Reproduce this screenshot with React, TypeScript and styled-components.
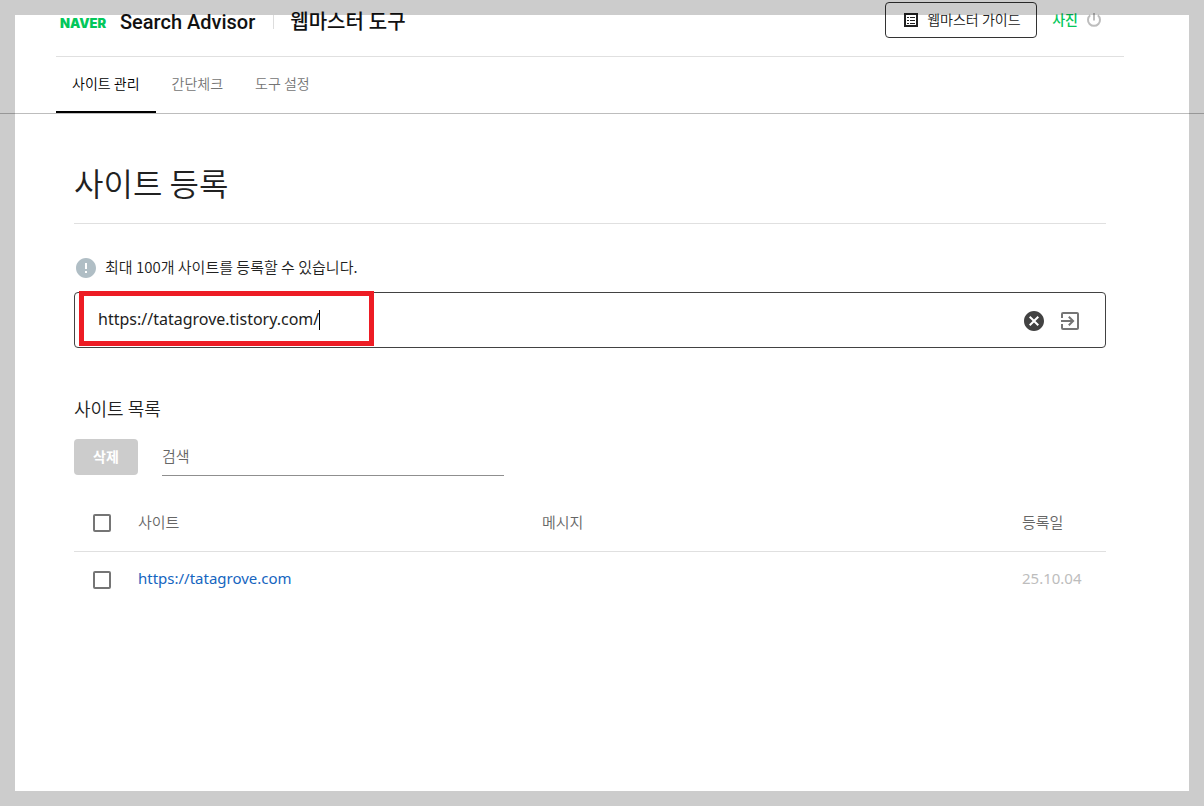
import React, { useState } from "react";
import styled, { createGlobalStyle } from "styled-components";
import { MdCancel, MdError, MdExitToApp } from "react-icons/md";

const GlobalStyle = createGlobalStyle`
  * { box-sizing: border-box; }
  body {
    margin: 0;
    background: #fff;
    color: #212121;
    font-family: "Noto Sans CJK KR", sans-serif;
    font-size: 15px;
    font-weight: 350;
  }
  button, input { font: inherit; color: inherit; }
  a { text-decoration: none; }
`;

const Page = styled.div`
  min-height: 100vh;
`;

const Frame = styled.div`
  position: fixed;
  inset: 0;
  border: 15px solid rgba(0, 0, 0, 0.2);
  pointer-events: none;
`;

const Container = styled.div`
  padding: 0 80px 0 56px;
`;

const Header = styled.header`
  display: flex;
  align-items: flex-start;
  justify-content: space-between;
  height: 57px;
  padding: 2px 21px 0 4px;
  border-bottom: 1px solid #e0e0e0;
`;

const Brand = styled.a`
  display: flex;
  align-items: center;
  height: 40px;
  color: #111;
`;

const Logo = styled.span`
  width: 60px;
  padding-top: 2px;
  color: #03c75a;
  font-family: Inter, sans-serif;
  font-size: 13px;
  font-weight: 900;
`;

const BrandName = styled.span`
  font-family: Roboto, "Noto Sans CJK KR", sans-serif;
  font-size: 20px;
  font-weight: 500;
  line-height: 36px;
`;

const BrandDivider = styled.span`
  width: 1px;
  height: 14px;
  margin: 0 16px 0 18px;
  background: #ddd;
`;

const Account = styled.div`
  display: flex;
  align-items: center;
  height: 36px;
`;

const GuideButton = styled.button`
  display: flex;
  align-items: center;
  gap: 7px;
  width: 152px;
  height: 36px;
  margin-right: 15px;
  padding: 0 0 0 16px;
  border: 1px solid #333;
  border-radius: 4px;
  background: none;
  font-size: 14px;
  white-space: nowrap;
`;

const ButtonLabel = styled.span`
  padding-bottom: 2px;
`;

const UserLink = styled.a`
  margin-right: 7px;
  padding-bottom: 2px;
  color: #03c75a;
  font-size: 14px;
  font-weight: 500;
`;

const IconButton = styled.button<{ $color: string }>`
  display: flex;
  padding: 0;
  border: 0;
  background: none;
  color: ${(p) => p.$color};
`;

const TabBar = styled.nav`
  border-bottom: 1px solid #bdbdbd;
`;

const Tabs = styled(Container)`
  display: flex;
`;

const Tab = styled.a<{ $active?: boolean }>`
  height: 56px;
  padding: 0 16px;
  border-bottom: 2px solid ${(p) => (p.$active ? "#000" : "transparent")};
  color: ${(p) => (p.$active ? "#000" : "#757575")};
  font-size: 14px;
  line-height: 52px;
`;

const Main = styled.main`
  padding: 44px 98px 44px 74px;
`;

const PageTitle = styled.h1`
  margin: 0;
  padding-bottom: 17px;
  border-bottom: 1px solid #e0e0e0;
  font-size: 32px;
  font-weight: 350;
  line-height: 48px;
`;

const Notice = styled.label`
  display: flex;
  align-items: center;
  gap: 7px;
  margin: 32px 0 12px;
  line-height: 22px;

  svg { color: #b0bec5; }
  span { padding-bottom: 2px; }
`;

const SiteField = styled.div`
  position: relative;
  display: flex;
  align-items: center;
  height: 56px;
  padding: 0 23px;
  border: 1px solid #424242;
  border-radius: 4px;
`;

const SiteInput = styled.input`
  field-sizing: content;
  min-width: 1px;
  padding: 0 0 2px;
  border: 0;
  outline: 0;
  background: none;
  font-family: "Noto Sans", "Noto Sans CJK KR", sans-serif;
  font-size: 16px;
  font-weight: 400;
`;

const Caret = styled.span`
  width: 1px;
  height: 20px;
  background: #000;
`;

const FieldActions = styled.div`
  display: flex;
  gap: 12px;
  margin-left: auto;
  padding-top: 2px;
`;

const Highlight = styled.div`
  position: absolute;
  top: -2px;
  left: 4px;
  width: 295px;
  height: 55px;
  border: 5px solid #ed1c24;
  pointer-events: none;
`;

const ListTitle = styled.h2`
  margin: 48px 0 19px;
  font-size: 18px;
  font-weight: 350;
  line-height: 24px;
`;

const Toolbar = styled.div`
  display: flex;
  gap: 24px;
  margin-bottom: 19px;
`;

const DeleteButton = styled.button`
  width: 64px;
  height: 36px;
  padding: 0 0 2px;
  border: 0;
  border-radius: 4px;
  background: #ccc;
  color: #fff;
  font-size: 14px;
  font-weight: 700;
`;

const SearchInput = styled.input`
  width: 342px;
  height: 37px;
  padding: 0 0 4px;
  border: 0;
  border-bottom: 1px solid #8f8f8f;
  outline: 0;
  background: none;

  &::placeholder { color: #666; opacity: 1; }
`;

const SiteTable = styled.table`
  width: 100%;
  table-layout: fixed;
  border-collapse: separate;
  border-spacing: 0;
  text-align: left;
`;

const HeadCell = styled.th<{ $width?: number }>`
  width: ${(p) => (p.$width ? `${p.$width}px` : "auto")};
  height: 57px;
  padding: 0 0 4px;
  border-bottom: 1px solid #e0e0e0;
  color: #666;
  font-weight: 350;
`;

const Cell = styled.td<{ $muted?: boolean }>`
  height: 56px;
  padding: 0 0 4px;
  color: ${(p) => (p.$muted ? "#bdbdbd" : "#212121")};
  font-family: "Noto Sans", "Noto Sans CJK KR", sans-serif;
  font-weight: 400;
`;

const SiteLink = styled.a`
  color: #1565c0;
`;

const Checkbox = styled.input`
  display: block;
  appearance: none;
  width: 18px;
  height: 18px;
  margin: 3px 0 0 19px;
  border: 2px solid #757575;
  border-radius: 2px;

  &:checked { background: #757575; }
`;

const ListIcon = () => (
  <svg width="18" height="18" viewBox="0 0 18 18" fill="none" stroke="currentColor" aria-hidden="true">
    <rect x="3" y="3" width="12" height="12" strokeWidth="2" />
    <path d="M5 6.5h2M5 9.5h2M5 12.5h2M8 6.5h5M8 9.5h5M8 12.5h5" strokeWidth="1" />
  </svg>
);

const PowerIcon = () => (
  <svg width="18" height="18" viewBox="0 0 18 18" fill="none" stroke="currentColor" strokeWidth="2" aria-hidden="true">
    <path d="M9 2v7.5M5.2 4.2a6 6 0 1 0 7.6 0" />
  </svg>
);

export default function App() {
  const [url, setUrl] = useState("https://tatagrove.tistory.com/");
  return (
    <Page>
      <GlobalStyle />
      <Container>
        <Header>
          <Brand href="#">
            <Logo>NAVER</Logo>
            <BrandName>Search Advisor</BrandName>
            <BrandDivider />
            <BrandName>웹마스터 도구</BrandName>
          </Brand>
          <Account>
            <GuideButton type="button">
              <ListIcon />
              <ButtonLabel>웹마스터 가이드</ButtonLabel>
            </GuideButton>
            <UserLink href="#">사진</UserLink>
            <IconButton type="button" $color="#bdbdbd" aria-label="로그아웃">
              <PowerIcon />
            </IconButton>
          </Account>
        </Header>
      </Container>
      <TabBar>
        <Tabs>
          <Tab href="#" $active>사이트 관리</Tab>
          <Tab href="#">간단체크</Tab>
          <Tab href="#">도구 설정</Tab>
        </Tabs>
      </TabBar>
      <Main>
        <PageTitle>사이트 등록</PageTitle>
        <Notice htmlFor="site-url">
          <MdError size={24} />
          <span>최대 100개 사이트를 등록할 수 있습니다.</span>
        </Notice>
        <SiteField>
          <SiteInput id="site-url" value={url} onChange={(e) => setUrl(e.target.value)} />
          <Caret />
          <FieldActions>
            <IconButton type="button" $color="#424242" aria-label="지우기" onClick={() => setUrl("")}>
              <MdCancel size={24} />
            </IconButton>
            <IconButton type="button" $color="#757575" aria-label="등록">
              <MdExitToApp size={24} />
            </IconButton>
          </FieldActions>
          <Highlight />
        </SiteField>
        <ListTitle>사이트 목록</ListTitle>
        <Toolbar>
          <DeleteButton type="button">삭제</DeleteButton>
          <SearchInput type="text" placeholder="검색" aria-label="검색" />
        </Toolbar>
        <SiteTable>
          <thead>
            <tr>
              <HeadCell $width={64}><Checkbox type="checkbox" aria-label="전체 선택" /></HeadCell>
              <HeadCell $width={404}>사이트</HeadCell>
              <HeadCell>메시지</HeadCell>
              <HeadCell $width={84}>등록일</HeadCell>
            </tr>
          </thead>
          <tbody>
            <tr>
              <Cell><Checkbox type="checkbox" aria-label="https://tatagrove.com" /></Cell>
              <Cell><SiteLink href="#">https://tatagrove.com</SiteLink></Cell>
              <Cell />
              <Cell $muted>25.10.04</Cell>
            </tr>
          </tbody>
        </SiteTable>
      </Main>
      <Frame />
    </Page>
  );
}
